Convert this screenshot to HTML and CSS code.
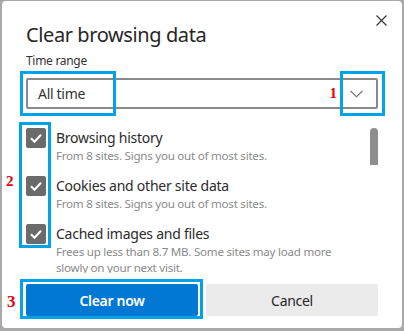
FILE: index.html
```html
<!DOCTYPE html>
<html lang="en">
<head>
  <meta charset="UTF-8">
  <meta name="viewport" content="width=device-width, initial-scale=1.0">
  <title>Clear browsing data</title>
  <link rel="stylesheet" href="styles.css">
</head>
<body>

<div class="dialog">
  <div class="close-row">
    <svg class="close" width="11" height="11" viewBox="0 0 11 11">
      <path d="M0.5 0.5 L10.5 10.5 M10.5 0.5 L0.5 10.5" stroke="#333" stroke-width="1.1" fill="none"/>
    </svg>
  </div>

  <h1>Clear browsing data</h1>
  <div class="label">Time range</div>

  <div class="select">
    <span>All time</span>
    <svg class="chevron" width="13" height="8" viewBox="0 0 13 8">
      <path d="M0.5 0.8 L6.5 6.8 L12.5 0.8" stroke="#666" stroke-width="1.1" fill="none"/>
    </svg>
    <span class="mark-box mark-left"></span>
    <span class="mark-box mark-right"></span>
    <span class="mark-num num-1">1</span>
  </div>

  <div class="list">
    <div class="list-scroll">
      <div class="items">
        <div class="item">
          <span class="check"><svg width="20" height="20" viewBox="0 0 20 20"><path d="M5 10.3 L8.5 13.8 L15 6.8" stroke="#fff" stroke-width="2" fill="none"/></svg></span>
          <div class="item-text">
            <div class="item-title">Browsing history</div>
            <div class="item-sub">From 8 sites. Signs you out of most sites.</div>
          </div>
        </div>
        <div class="item">
          <span class="check"><svg width="20" height="20" viewBox="0 0 20 20"><path d="M5 10.3 L8.5 13.8 L15 6.8" stroke="#fff" stroke-width="2" fill="none"/></svg></span>
          <div class="item-text">
            <div class="item-title">Cookies and other site data</div>
            <div class="item-sub">From 8 sites. Signs you out of most sites.</div>
          </div>
        </div>
        <div class="item">
          <span class="check"><svg width="20" height="20" viewBox="0 0 20 20"><path d="M5 10.3 L8.5 13.8 L15 6.8" stroke="#fff" stroke-width="2" fill="none"/></svg></span>
          <div class="item-text">
            <div class="item-title">Cached images and files</div>
            <div class="item-sub">Frees up less than 8.7 MB. Some sites may load more slowly on your next visit.</div>
          </div>
        </div>
      </div>
      <div class="scrollbar"><div class="thumb"></div></div>
    </div>
    <span class="mark-box mark-checks"></span>
    <span class="mark-num num-2">2</span>
  </div>

  <div class="buttons">
    <button class="btn btn-primary">
      Clear now
      <span class="mark-box mark-clear"></span>
      <span class="mark-num num-3">3</span>
    </button>
    <button class="btn btn-cancel">Cancel</button>
  </div>
</div>

</body>
</html>
```

FILE: styles.css
```css
body {
  margin: 0;
  padding: 1px 2px 0 2px;
  background-color: #a9a9a9;
  font-family: "Segoe UI", "Noto Sans", sans-serif;
  color: #333;
  height: 331px;
  box-sizing: border-box;
  overflow: hidden;
}

.dialog {
  background-color: #fff;
  border-radius: 4px;
  height: 327px;
  box-sizing: border-box;
  padding: 0 24px 0 24px;
  display: flex;
  flex-direction: column;
}

.close-row {
  height: 22px;
  box-sizing: border-box;
  padding-top: 14px;
  display: flex;
  justify-content: flex-end;
  margin-right: -9px;
}

.close {
  display: block;
}

h1 {
  margin: 0;
  font-size: 20px;
  line-height: 24px;
  font-weight: 400;
  letter-spacing: -0.4px;
  color: #262626;
}

.label {
  margin-top: 6px;
  font-size: 12px;
  line-height: 16px;
  letter-spacing: -0.3px;
  color: #333;
}

/* Time range select */
.select {
  position: relative;
  margin-top: 9px;
  height: 31px;
  border: 2px solid #8a8a8a;
  border-radius: 2px;
  box-sizing: border-box;
  display: flex;
  align-items: center;
  justify-content: space-between;
  padding: 0 13px 0 10px;
  font-size: 14px;
  letter-spacing: -0.3px;
  color: #333;
}

.chevron {
  display: block;
}

/* Checkbox list */
.list {
  position: relative;
  margin-top: 13px;
}

.list-scroll {
  height: 151px;
  overflow: hidden;
  display: flex;
}

.items {
  flex: 1;
  padding-top: 6px;
  display: flex;
  flex-direction: column;
  gap: 12px;
}

.item {
  display: flex;
  gap: 10px;
}

.check {
  flex: none;
  width: 20px;
  height: 20px;
  border-radius: 2px;
  background-color: #6b6b6b;
}

.check svg {
  display: block;
}

.item-title {
  font-size: 14px;
  line-height: 20px;
  letter-spacing: -0.25px;
  color: #2b2b2b;
}

.item-sub {
  font-size: 11.6px;
  line-height: 16px;
  letter-spacing: -0.25px;
  color: #8a8a8a;
  padding-right: 24px;
}

.scrollbar {
  flex: none;
  width: 8px;
  padding-top: 6px;
}

.thumb {
  height: 37px;
  background-color: #8e8e8e;
  border-radius: 4px 4px 0 0;
}

/* Buttons */
.buttons {
  margin-top: 11px;
  display: grid;
  grid-template-columns: 1fr 1fr;
  gap: 8px;
}

.btn {
  position: relative;
  height: 32px;
  border: none;
  border-radius: 2px;
  font-family: "Segoe UI", "Noto Sans", sans-serif;
  font-size: 14px;
  letter-spacing: -0.3px;
  padding: 0;
}

.btn-primary {
  background-color: #0078d4;
  color: #fff;
  font-weight: 600;
}

.btn-cancel {
  background-color: #ebebeb;
  color: #262626;
}

/* Annotation marks */
.mark-box {
  position: absolute;
  border: 3px solid #00a2e8;
  box-sizing: border-box;
}

.mark-left {
  left: -8px;
  top: -9px;
  width: 96px;
  height: 45px;
}

.mark-right {
  right: -9px;
  top: -9px;
  width: 45px;
  height: 45px;
}

.mark-checks {
  left: -7px;
  top: 0;
  width: 32px;
  height: 126px;
}

.mark-clear {
  left: -6px;
  top: -5px;
  width: 183px;
  height: 40px;
}

.mark-num {
  position: absolute;
  font-family: "Liberation Serif", serif;
  font-weight: 700;
  color: #e8000b;
  line-height: 1;
  letter-spacing: 0;
}

.num-1 {
  right: 39px;
  top: 6px;
  font-size: 15px;
}

.num-2 {
  left: -20px;
  top: 52px;
  font-size: 15px;
}

.num-3 {
  left: -19px;
  top: 9px;
  font-size: 17px;
}
```
